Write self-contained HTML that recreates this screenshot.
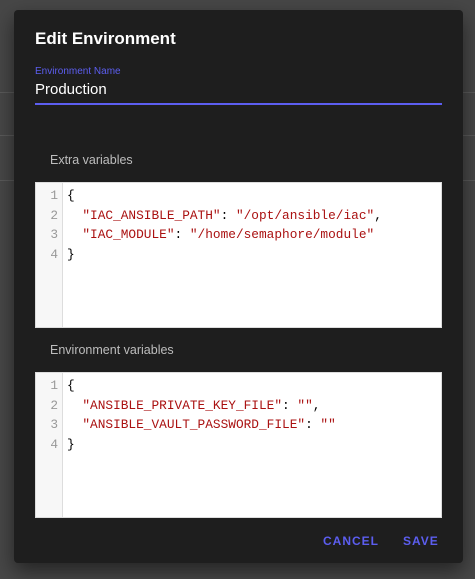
<!DOCTYPE html>
<html><head><style>
*{box-sizing:border-box;margin:0;padding:0}
body{width:475px;height:579px;background:#474747;font-family:"Liberation Sans",Roboto,sans-serif;position:relative;overflow:hidden}
.bgline{position:absolute;left:0;width:475px;height:1px;background:#5a5a5a}
.dlg{position:absolute;left:14px;top:10px;width:449px;height:553px;background:#1e1e1e;border-radius:4px;box-shadow:0 8px 20px rgba(0,0,0,.5)}
.title{position:absolute;left:21px;top:19px;color:#fff;font-size:17px;font-weight:bold}
.lbl{position:absolute;left:21px;top:56px;color:#5c5ef0;font-size:10px}
.val{position:absolute;left:21px;top:71px;color:#fff;font-size:15px}
.uline{position:absolute;left:21px;top:93px;width:407px;height:2px;background:#5c5ef0}
.sec{position:absolute;left:36px;color:#bdbdbd;font-size:12.5px}
.ed{position:absolute;left:21px;width:407px;background:#fff;border:1px solid #ddd;font-family:"Liberation Mono",monospace;font-size:12.8px}
.gut{position:absolute;left:0;top:0;bottom:0;width:27px;background:#f7f7f7;border-right:1px solid #ddd;color:#999;text-align:right;padding-right:4px}
.code{position:absolute;left:31px;top:0;color:#000;white-space:pre}
.ln{height:19.7px;line-height:19.7px}
.gut,.code{padding-top:3px}
.s{color:#a11}
.btn{position:absolute;top:534px;color:#5c5ef0;font-size:12px;font-weight:bold;letter-spacing:1px}
</style></head><body>
<div class="bgline" style="top:92px"></div>
<div class="bgline" style="top:135px"></div>
<div class="bgline" style="top:180px"></div>
<div class="dlg">
<div class="title">Edit Environment</div>
<div class="lbl">Environment Name</div>
<div class="val">Production</div>
<div class="uline"></div>
<div class="sec" style="top:143px">Extra variables</div>
<div class="ed" style="top:172px;height:146px">
<div class="gut"><div class="ln">1</div><div class="ln">2</div><div class="ln">3</div><div class="ln">4</div></div>
<div class="code"><div class="ln">{</div><div class="ln">  <span class="s">"IAC_ANSIBLE_PATH"</span>: <span class="s">"/opt/ansible/iac"</span>,</div><div class="ln">  <span class="s">"IAC_MODULE"</span>: <span class="s">"/home/semaphore/module"</span></div><div class="ln">}</div></div>
</div>
<div class="sec" style="top:333px">Environment variables</div>
<div class="ed" style="top:362px;height:146px">
<div class="gut"><div class="ln">1</div><div class="ln">2</div><div class="ln">3</div><div class="ln">4</div></div>
<div class="code"><div class="ln">{</div><div class="ln">  <span class="s">"ANSIBLE_PRIVATE_KEY_FILE"</span>: <span class="s">""</span>,</div><div class="ln">  <span class="s">"ANSIBLE_VAULT_PASSWORD_FILE"</span>: <span class="s">""</span></div><div class="ln">}</div></div>
</div>
</div>
<div class="btn" style="left:323px">CANCEL</div>
<div class="btn" style="left:403px">SAVE</div>
</body></html>
